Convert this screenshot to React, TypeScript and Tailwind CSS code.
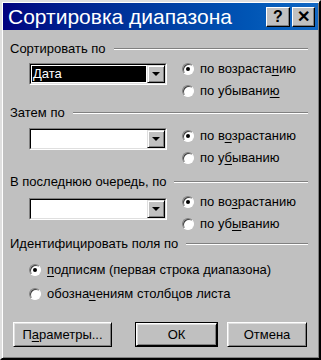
import React from "react";

const Radio = ({ checked }: { checked?: boolean }) => (
  <span className="flex h-[12px] w-[12px] shrink-0 items-center justify-center rounded-full border border-t-[#808080] border-l-[#808080] border-r-white border-b-white bg-white shadow-[inset_1px_1px_#404040]">
    {checked && <span className="h-[4px] w-[4px] rounded-full bg-black" />}
  </span>
);

const Combo = ({ value }: { value?: string }) => (
  <div className="flex h-[22px] w-[138px] shrink-0 border border-t-[#808080] border-l-[#808080] border-r-white border-b-white">
    <div className="flex flex-1 border border-t-black border-l-black border-r-[#dfdfdf] border-b-[#dfdfdf] bg-white">
      <div className="flex flex-1 p-[1px]">
        {value ? (
          <div className="flex-1 bg-black pl-[1px] leading-[16px] text-white">
            <span className="underline underline-offset-2">{value[0]}</span>
            {value.slice(1)}
          </div>
        ) : null}
      </div>
      <div className="flex w-[18px] items-center justify-center border border-t-[#dfdfdf] border-l-[#dfdfdf] border-r-black border-b-black bg-[#c0c0c0] shadow-[inset_1px_1px_white,inset_-1px_-1px_#808080]">
        <span className="h-0 w-0 border-x-[4px] border-t-[4px] border-x-transparent border-t-black" />
      </div>
    </div>
  </div>
);

const GroupLabel = ({ label }: { label: string }) => (
  <div className="flex h-[16px] items-center">
    <span>{label}</span>
    <div className="ml-[8px] flex-1 border-t border-b border-t-[#808080] border-b-white" />
  </div>
);

const Option = ({
  checked,
  pre,
  key_,
  post,
  className = "h-[22px]",
}: {
  checked?: boolean;
  pre: string;
  key_: string;
  post: string;
  className?: string;
}) => (
  <div className={"flex items-center gap-[6px] " + className}>
    <Radio checked={checked} />
    <span>
      {pre}
      <span className="underline underline-offset-2">{key_}</span>
      {post}
    </span>
  </div>
);

const Button = ({
  label,
  accel,
  className,
  isDefault,
}: {
  label: string;
  accel?: [string, string, string];
  className: string;
  isDefault?: boolean;
}) => (
  <div
    className={
      "h-[25px] " + className + (isDefault ? " border border-black" : "")
    }
  >
    <div className="flex h-full items-center justify-center border border-t-white border-l-white border-r-black border-b-black bg-[#c0c0c0] shadow-[inset_1px_1px_#dfdfdf,inset_-1px_-1px_#808080]">
      {accel ? (
        <span>
          {accel[0]}
          <span className="underline underline-offset-2">{accel[1]}</span>
          {accel[2]}
        </span>
      ) : (
        label
      )}
    </div>
  </div>
);

export default function App() {
  return (
    <div
      className="h-[360px] w-[321px] border-2 border-t-[#dfdfdf] border-l-[#dfdfdf] border-r-black border-b-black bg-[#c0c0c0] p-[1px] text-[13px] text-black shadow-[inset_1px_1px_white,inset_-1px_-1px_#808080]"
      style={{ fontFamily: '"Liberation Sans", Arial, sans-serif' }}
    >
      <div className="flex h-[27px] items-center justify-between bg-gradient-to-r from-[#000080] to-[#1268c4] pl-[5px] pr-[3px]">
        <span className="text-[21px] leading-none text-white">
          Сортировка диапазона
        </span>
        <div className="flex gap-[2px]">
          <div className="flex h-[20px] w-[24px] items-center justify-center border border-t-white border-l-white border-r-black border-b-black bg-[#c0c0c0] text-[16px] font-bold leading-none shadow-[inset_-1px_-1px_#808080]">
            ?
          </div>
          <div className="flex h-[20px] w-[23px] items-center justify-center border border-t-white border-l-white border-r-black border-b-black bg-[#c0c0c0] text-[16px] font-bold leading-none shadow-[inset_-1px_-1px_#808080]">
            ✕
          </div>
        </div>
      </div>

      <div className="flex flex-col pl-[7px] pr-[10px]">
        <div className="mt-[11px]">
          <GroupLabel label="Сортировать по" />
        </div>
        <div className="mt-[1px] flex items-start pl-[19px]">
          <div className="mt-[5px]">
            <Combo value="Дата" />
          </div>
          <div className="ml-[15px] flex flex-col">
            <Option checked pre="по возраста" key_="н" post="ию" />
            <Option pre="по убывани" key_="ю" post="" />
          </div>
        </div>

        <div className="mt-[3px]">
          <GroupLabel label="Затем по" />
        </div>
        <div className="mt-[4px] flex items-start pl-[19px]">
          <div className="mt-[3px]">
            <Combo />
          </div>
          <div className="ml-[15px] flex flex-col">
            <Option checked pre="по в" key_="о" post="зрастанию" />
            <Option pre="по у" key_="б" post="ыванию" />
          </div>
        </div>

        <div className="mt-[5px]">
          <GroupLabel label="В последнюю очередь, по" />
        </div>
        <div className="mt-[1px] flex items-start pl-[19px]">
          <div className="mt-[7px]">
            <Combo />
          </div>
          <div className="ml-[15px] flex flex-col">
            <Option checked pre="по во" key_="з" post="растанию" />
            <Option pre="по уб" key_="ы" post="ванию" />
          </div>
        </div>

        <div className="mt-[1px]">
          <GroupLabel label="Идентифицировать поля по" />
        </div>
        <div className="mt-[6px] flex flex-col pl-[19px]">
          <Option
            checked
            pre=""
            key_="п"
            post="одписям (первая строка диапазона)"
            className="h-[24px]"
          />
          <Option
            pre="обозна"
            key_="ч"
            post="ениям столбцов листа"
            className="h-[24px]"
          />
        </div>

        <div className="mt-[16px] flex">
          <Button
            label="Параметры..."
            accel={["П", "а", "раметры..."]}
            className="ml-[3px] w-[99px]"
          />
          <Button label="ОК" className="ml-[23px] w-[83px]" isDefault />
          <Button label="Отмена" className="ml-[9px] w-[80px]" />
        </div>
      </div>
    </div>
  );
}
